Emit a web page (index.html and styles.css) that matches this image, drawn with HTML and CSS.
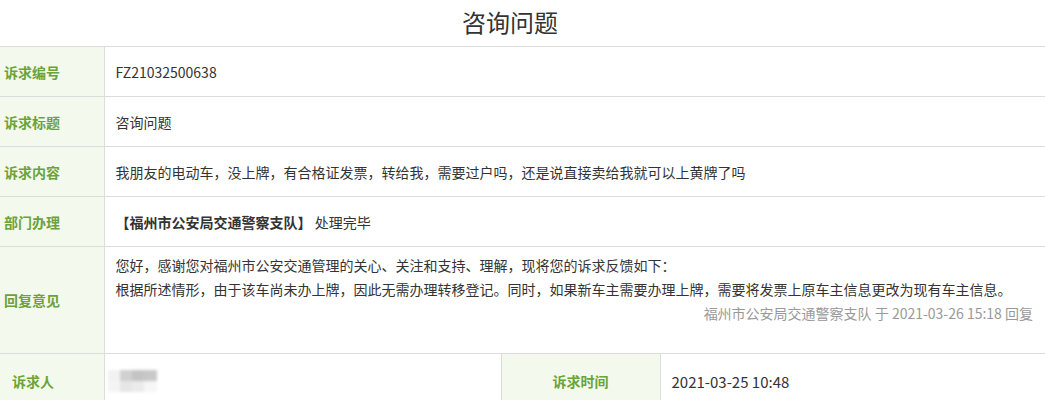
FILE: index.html
```html
<!DOCTYPE html>
<html lang="zh-CN">
<head>
<meta charset="utf-8">
<title>咨询问题</title>
<link rel="stylesheet" href="styles.css">
</head>
<body>
<div class="page">
  <h1 class="title">咨询问题</h1>
  <table class="detail">
    <colgroup>
      <col class="c1"><col class="c2"><col class="c3"><col class="c4">
    </colgroup>
    <tr class="row">
      <th class="label">诉求编号</th>
      <td class="value" colspan="3">FZ21032500638</td>
    </tr>
    <tr class="row">
      <th class="label">诉求标题</th>
      <td class="value" colspan="3">咨询问题</td>
    </tr>
    <tr class="row">
      <th class="label">诉求内容</th>
      <td class="value" colspan="3">我朋友的电动车，没上牌，有合格证发票，转给我，需要过户吗，还是说直接卖给我就可以上黄牌了吗</td>
    </tr>
    <tr class="row">
      <th class="label">部门办理</th>
      <td class="value" colspan="3"><b class="dept">【福州市公安局交通警察支队】</b> 处理完毕</td>
    </tr>
    <tr class="reply-row">
      <th class="label">回复意见</th>
      <td class="value reply" colspan="3">
        <p class="reply-line">您好，感谢您对福州市公安交通管理的关心、关注和支持、理解，现将您的诉求反馈如下：</p>
        <p class="reply-line">根据所述情形，由于该车尚未办上牌，因此无需办理转移登记。同时，如果新车主需要办理上牌，需要将发票上原车主信息更改为现有车主信息。</p>
        <p class="reply-sign">福州市公安局交通警察支队 于 2021-03-26 15:18 回复</p>
      </td>
    </tr>
    <tr class="last-row">
      <th class="label label-person">诉求人</th>
      <td class="value">
        <div class="blur">
          <span class="px p1"></span><span class="px p2"></span><span class="px p3"></span><span class="px p4"></span>
          <span class="px p5"></span><span class="px p6"></span><span class="px p7"></span><span class="px p8"></span>
        </div>
      </td>
      <th class="label label-center">诉求时间</th>
      <td class="value date">2021-03-25 10:48</td>
    </tr>
  </table>
</div>
</body>
</html>
```

FILE: styles.css
```css
html, body {
  margin: 0;
  padding: 0;
  background: #fff;
}
body {
  font-family: "Microsoft YaHei", "Noto Sans CJK SC", "Noto Sans", sans-serif;
  font-size: 14px;
  color: #333;
}
.page {
  width: 1045px;
}
.title {
  margin: 0;
  height: 46px;
  line-height: 44px;
  font-size: 24px;
  font-weight: normal;
  color: #333;
  text-align: center;
  padding-right: 25px;
}
.detail {
  width: 1045px;
  table-layout: fixed;
  border-collapse: collapse;
}
.c1 { width: 104px; }
.c2 { width: 397px; }
.c3 { width: 159px; }
.c4 { width: 385px; }
.detail th,
.detail td {
  border-top: 1px solid #dcdcdc;
  border-bottom: 1px solid #dcdcdc;
  padding: 0;
}
.label {
  background: #f3f9ec;
  color: #6ba33a;
  font-weight: bold;
  text-align: left;
  padding-left: 4px !important;
  border-right: 1px solid #dcdcdc;
  vertical-align: middle;
}
.value {
  padding-left: 11px !important;
  vertical-align: middle;
  color: #333;
}
.row th, .row td {
  height: 49px;
}
.dept {
  font-weight: bold;
}
.reply-row th {
  height: 106px;
}
.reply-row td {
  height: 100px;
}
.reply {
  vertical-align: top !important;
  padding-top: 6px !important;
  padding-right: 12px !important;
}
.reply-line {
  margin: 0;
  line-height: 24px;
}
.reply-sign {
  margin: 0;
  line-height: 24px;
  text-align: right;
  color: #999;
}
.last-row th, .last-row td {
  height: 54px;
  border-bottom: none;
}
.label-person {
  padding-left: 12px !important;
}
.label-center {
  text-align: center;
  padding-left: 0 !important;
  border-left: 1px solid #dcdcdc;
}
.date {
  font-size: 15px;
}
.blur {
  display: grid;
  grid-template-columns: 12px 12px 12px 13px;
  grid-template-rows: 11px 11px;
  width: 49px;
  margin-left: -8px;
  filter: blur(1.5px);
}
.px { display: block; }
.p1 { background: #f2f2f2; }
.p2 { background: #d0d0d0; }
.p3 { background: #c4c4c4; }
.p4 { background: #c8c8c8; }
.p5 { background: #f4f4f4; }
.p6 { background: #e6e6e6; }
.p7 { background: #ebebeb; }
.p8 { background: #f6f6f6; }
```
